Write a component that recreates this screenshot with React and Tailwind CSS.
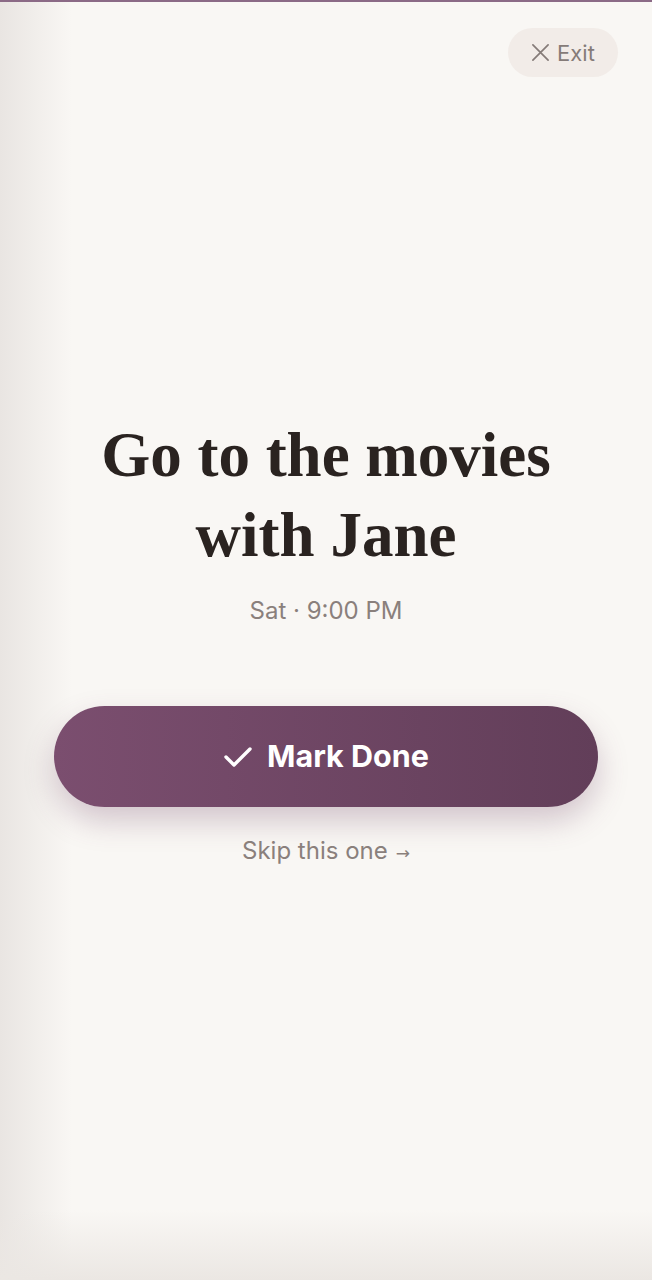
import React from "react";

export default function App() {
  return (
    <div className="relative w-[652px] h-[1280px] overflow-hidden bg-[#f9f7f4]" style={{ fontFamily: "Inter, 'Noto Sans', sans-serif" }}>
      {/* left edge shading */}
      <div className="pointer-events-none absolute top-0 bottom-0 left-0 w-[72px] bg-gradient-to-r from-[#e9e5e2] to-[#f9f7f4]/0" />
      {/* bottom shading */}
      <div className="pointer-events-none absolute left-0 right-0 bottom-0 h-[70px] bg-gradient-to-t from-[#ebe7e3] to-[#f9f7f4]/0" />
      {/* top line */}
      <div className="absolute top-0 left-0 right-0 h-[2px] bg-[#8b6a86]" />

      <button className="absolute top-[28px] right-[34px] h-[49px] w-[110px] rounded-full bg-[#f2ece8] flex items-center justify-center gap-[7px] text-[#857b78] text-[22px]">
        <svg width="19" height="19" viewBox="0 0 20 20" fill="none" stroke="currentColor" strokeWidth="1.8" strokeLinecap="round">
          <path d="M2 2 L18 18 M18 2 L2 18" />
        </svg>
        <span className="leading-none">Exit</span>
      </button>

      <div className="relative h-full flex flex-col items-center pt-[415px]">
        <h1
          className="text-center text-[63px] leading-[80px] font-bold text-[#2a2320]"
          style={{ fontFamily: "'Liberation Serif', 'DejaVu Serif', serif" }}
        >
          Go to the movies
          <br />
          with Jane
        </h1>
        <p className="mt-[22px] text-[24px] leading-[28px] text-[#8a807c]">Sat · 9:00 PM</p>
        <button className="mt-[81px] w-[544px] h-[101px] rounded-full bg-gradient-to-r from-[#7b4e6f] to-[#623e59] shadow-[0_14px_30px_rgba(110,70,100,0.28)] flex items-center justify-center gap-[14px] text-white">
          <svg width="30" height="24" viewBox="0 0 30 24" fill="none" stroke="white" strokeWidth="3.4" strokeLinecap="round" strokeLinejoin="round">
            <path d="M3 12 L11 20 L27 4" />
          </svg>
          <span className="text-[30.5px] font-bold leading-none">Mark Done</span>
        </button>
        <p className="mt-[28px] text-[24px] leading-[28px] text-[#8a807c] flex items-center">
          <span>Skip this one</span>
          <span className="ml-[8px] text-[17px] mt-[4px]" style={{ fontFamily: "'DejaVu Sans', sans-serif" }}>→</span>
        </p>
      </div>
    </div>
  );
}
